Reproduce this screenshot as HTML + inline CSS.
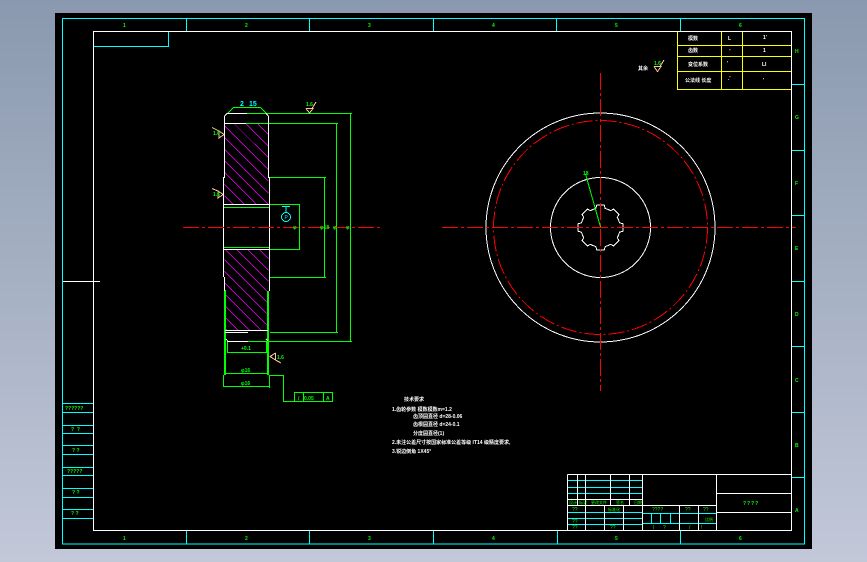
<!DOCTYPE html>
<html>
<head>
<meta charset="utf-8">
<style>
html,body{margin:0;padding:0;width:867px;height:562px;overflow:hidden;background:linear-gradient(#8a99af,#c2c8d8);}
svg{position:absolute;left:0;top:0;display:block;}
text{font-family:"Liberation Sans","Noto Sans CJK SC",sans-serif;font-size:5px;}
.g text,.g{fill:#00ff00;}
.w text{fill:#fff;}
</style>
</head>
<body>
<svg width="867" height="562" viewBox="0 0 867 562" shape-rendering="crispEdges" fill="none">
<defs>
<clipPath id="h1"><rect x="224.5" y="124" width="44" height="80"/></clipPath>
<clipPath id="h2"><rect x="224.5" y="250" width="44" height="80"/></clipPath>
</defs>
<rect x="55" y="13" width="757" height="536" fill="#000"/>

<!-- cyan frame -->
<g stroke="#00ffff" stroke-width="1">
<rect x="62.5" y="18.5" width="742" height="525.5"/>
<path d="M186.5 18.5V31M309.5 18.5V31M433.5 18.5V31M556.5 18.5V31M680.5 18.5V31"/>
<path d="M186.5 531V544M309.5 531V544M433.5 531V544M557.5 531V544M680.5 531V544"/>
<path d="M792 84.5H804M792 150.5H804M792 215.5H804M792 281.5H804M792 346.5H804M792 412.5H804M792 477.5H804"/>
<path d="M94 46.5H168.5V31.5"/>
<path d="M63 403.5H93M63 412.5H93M63 425.5H93M63 433.5H93M63 445.5H93M63 454.5H93M63 467.5H93M63 475.5H93M63 488.5H93M63 497.5H93M63 509.5H93M63 518.5H93"/>
</g>
<!-- white frame -->
<g stroke="#fff" stroke-width="1">
<rect x="93.5" y="31.5" width="698" height="499"/>
<path d="M63 281.5H100"/>
</g>

<!-- top right table -->
<g stroke="#ffff00" stroke-width="1">
<path d="M677.5 31.5V89.5H791M677.5 45.5H791M677.5 56.5H791M677.5 71.5H791M721.5 32V89M742.5 32V89"/>
</g>
<g class="w" font-weight="bold">
<text x="688" y="40">模数</text>
<text x="688" y="52">齿数</text>
<text x="688" y="66">变位系数</text>
<text x="685" y="82">公法线 长度</text>
<text x="728" y="40">L</text><text x="729" y="51">-</text><text x="727" y="65">'</text><text x="728" y="80">.'</text>
<text x="763" y="39">1'</text><text x="763" y="52">1</text><text x="762" y="66">LI</text><text x="763" y="82">'</text>
<text x="638" y="70">其余</text>
</g>

<!-- title block -->
<g stroke="#00ffff" stroke-width="1">
<path d="M568 480.5H642M568 487.5H642M568 493.5H642M568 512.5H642M568 518.5H642M568 524.5H642"/>
<path d="M643 513.5H716M643 523.5H716M651.5 514V523M660.5 514V523M670.5 514V523"/>
</g>
<g stroke="#fff" stroke-width="1">
<path d="M567.5 474.5H791M567.5 474.5V530M577.5 475V505M585.5 475V530M610.5 475V505M629.5 475V505M642.5 475V530M716.5 475V530"/>
<path d="M568 499.5H642M568 505.5H716M604.5 505V530M623.5 505V530M679.5 505V530M698.5 505V530"/>
<path d="M717 493.5H791M717 512.5H791"/>
</g>

<!-- zone labels -->
<g class="g" font-weight="bold">
<text x="123" y="27">1</text><text x="245" y="27">2</text><text x="368" y="27">3</text><text x="492" y="27">4</text><text x="615" y="27">5</text><text x="739" y="27">6</text>
<text x="123" y="540">1</text><text x="245" y="540">2</text><text x="368" y="540">3</text><text x="492" y="540">4</text><text x="615" y="540">5</text><text x="739" y="540">6</text>
<text x="795" y="53">H</text><text x="795" y="119">G</text><text x="795" y="185">F</text><text x="795" y="250">E</text><text x="795" y="316">D</text><text x="795" y="382">C</text><text x="795" y="447">B</text><text x="795" y="512">A</text>
<text x="65" y="410">??????</text>
<text x="71" y="431">?&#160;&#160;?</text>
<text x="72" y="452">? ?</text>
<text x="67" y="473">?????</text>
<text x="72" y="494">?&#160;?</text>
<text x="71" y="515">?&#160;?</text>
<text x="743" y="505" letter-spacing="1">????</text>
</g>
<g class="g">
<text x="569" y="504" style="font-size:4px">设计</text><text x="579" y="504" style="font-size:4px">标记</text><text x="591" y="504" style="font-size:4px">更改文件</text><text x="616" y="504" style="font-size:4px">签名</text><text x="634" y="504" style="font-size:4px">日期</text>
<text x="572" y="511">??</text><text x="608" y="511" style="font-size:4px">标准化</text>
<text x="572" y="523">??</text><text x="572" y="529">??</text><text x="610" y="529">??</text>
<text x="652" y="511">????</text><text x="685" y="511">??</text><text x="703" y="511">??</text><text x="705" y="521" style="font-size:4px">比例</text>
<text x="653" y="529">l</text><text x="663" y="529">?</text><text x="689" y="529">/</text><text x="701" y="529">!</text>
</g>

<!-- hatch -->
<g stroke="#ff00ff" stroke-width="0.7" clip-path="url(#h1)">
<path d="M224 78.4L269 123.4M224 90.1L269 135.1M224 101.8L269 146.8M224 113.5L269 158.5M224 125.2L269 170.2M224 136.9L269 181.9M224 148.6L269 193.6M224 160.3L269 205.3M224 172L269 217M224 183.7L269 228.7M224 195.4L269 240.4M224 207.1L269 252.1"/>
</g>
<g stroke="#ff00ff" stroke-width="0.7" clip-path="url(#h2)">
<path d="M224 203L269 248M224 214.3L269 259.3M224 225.6L269 270.6M224 236.9L269 281.9M224 248.2L269 293.2M224 259.5L269 304.5M224 270.8L269 315.8M224 282.1L269 327.1M224 293.4L269 338.4M224 304.7L269 349.7M224 316L269 361M224 327.3L269 372.3"/>
</g>

<!-- green dims -->
<g stroke="#00ff00" stroke-width="1">
<path d="M227.5 113.5L233.5 107.5H260.5L266.5 113.5"/>
<path d="M247 113.5H352M350.5 114V341"/>
<path d="M246 123.5H338M336.5 124V333M270 332.5H338"/>
<path d="M269 177.5H326M324.5 178V277.5M269 277.5H326"/>
<path d="M269 204.5H299.5V249.5H269"/>
<path d="M224 207.5H269M224 247.5H269"/>
<path d="M248 341.5H352"/>
<path d="M227.5 341V353M266.5 341V353M227.5 352.5H266.5"/>
<path d="M224.5 373.5H268.5M223.5 386.5H269.5"/>
<path d="M223.5 375V387M269.5 375V388"/>
<path d="M269 375.5H283.5V401.5H294.5"/>
<rect x="294.5" y="392.5" width="38" height="9"/>
<path d="M303.5 393V401M323.5 393V401"/>
</g>
<g stroke="#00ff00" stroke-width="2">
<path d="M225 290V375M268 291V375"/>
</g>
<!-- white profile -->
<g stroke="#fff" stroke-width="1">
<path d="M268.5 116V177.5H269.5V291M268.5 116L266 113.5"/>
<path d="M227 113.5H247M224.5 116L227 113.5M224.5 116V177.5H223.5V277M224.5 277V291"/>
<path d="M225 123.5H246"/>
<path d="M224 204.5H269M224 249.5H269"/>
<path d="M225 330.5H268M225 332.5H248"/>
<path d="M226 339L228 341.5H248M266 339L268 341"/>
</g>

<!-- right view -->
<g stroke="#fff" stroke-width="1">
<circle cx="600.5" cy="227.5" r="114.5"/>
<circle cx="600.5" cy="227.5" r="50"/>
<g transform="translate(600.5 227.5)">
<path d="M-4.7 -19L-3.8 -22.3L3.8 -22.3L4.7 -19A19.6 19.6 0 0 1 10.1 -16.8"/>
<path transform="rotate(45)" d="M-4.7 -19L-3.8 -22.3L3.8 -22.3L4.7 -19A19.6 19.6 0 0 1 10.1 -16.8"/>
<path transform="rotate(90)" d="M-4.7 -19L-3.8 -22.3L3.8 -22.3L4.7 -19A19.6 19.6 0 0 1 10.1 -16.8"/>
<path transform="rotate(135)" d="M-4.7 -19L-3.8 -22.3L3.8 -22.3L4.7 -19A19.6 19.6 0 0 1 10.1 -16.8"/>
<path transform="rotate(180)" d="M-4.7 -19L-3.8 -22.3L3.8 -22.3L4.7 -19A19.6 19.6 0 0 1 10.1 -16.8"/>
<path transform="rotate(225)" d="M-4.7 -19L-3.8 -22.3L3.8 -22.3L4.7 -19A19.6 19.6 0 0 1 10.1 -16.8"/>
<path transform="rotate(270)" d="M-4.7 -19L-3.8 -22.3L3.8 -22.3L4.7 -19A19.6 19.6 0 0 1 10.1 -16.8"/>
<path transform="rotate(315)" d="M-4.7 -19L-3.8 -22.3L3.8 -22.3L4.7 -19A19.6 19.6 0 0 1 10.1 -16.8"/>
</g>
</g>

<!-- centerlines -->
<g stroke="#ff0000" stroke-width="1">
<path stroke-dasharray="16 3 3 3" d="M183 227.5H383"/>
<path stroke-dasharray="16 3 3 3" d="M442 227.5H796"/>
<path stroke-dasharray="17 3 3 3" d="M600.5 73V391"/>
<circle cx="600.5" cy="227.5" r="107" stroke-dasharray="16 3 2 3"/>
</g>

<path d="M600.5 227L585.5 174" stroke="#00ff00" stroke-width="1"/>
<text x="583" y="175" fill="#00ff00" font-weight="bold">18</text>

<!-- roughness symbols -->
<g stroke="#ffc896" stroke-width="1">
<path d="M654 66.5H661L657.5 71.5L654 66.5M660 66.5L664 60"/>
<path d="M306 108.5H313L309.5 113L306 108.5M312 108.5L316 102"/>
<path d="M219 131V138L224 134.5L219 131L212 127.5"/>
<path d="M218 191V198L223 194.5L218 191L212 188.5"/>
<path d="M275.5 353V360L270 356.5L275.5 353M275.5 360L281 363"/>
</g>
<g class="g" font-weight="bold">
<text x="654" y="65">1.6</text>
<text x="306" y="106">1.6</text>
<text x="213" y="135">1.6</text>
<text x="213" y="196">1.6</text>
<text x="277" y="359">1.6</text>
<text x="293" y="229">φ</text>
<text x="320" y="229">φ18</text>
<text x="333" y="229">φ</text>
<text x="346" y="229">φ</text>
<text x="241" y="350">+0.1</text>
<text x="241" y="372">φ16</text>
<text x="241" y="385">φ16</text>
<text x="304" y="400">0.05</text>
<text x="326" y="400">A</text>
<text x="298" y="400">/</text>
</g>

<!-- datum -->
<g stroke="#00ffff" stroke-width="1">
<path d="M282 206.5H290M286 207V212"/>
<circle cx="286" cy="217" r="4.5"/>
</g>
<text x="284.5" y="219" fill="#00ffff">P</text>
<text x="240" y="106" fill="#00ffff" style="font-size:7px" font-weight="bold">2</text>
<text x="249" y="106" fill="#00ffff" style="font-size:7px" font-weight="bold">15</text>

<!-- notes -->
<g class="w" font-weight="bold">
<text x="404" y="401">技术要求</text>
<text x="392" y="411">1.齿轮参数 模数模数m=1.2</text>
<text x="413" y="418">齿顶圆直径 d=28-0.06</text>
<text x="413" y="426">齿根圆直径 d=24-0.1</text>
<text x="413" y="435">分度圆直径(1)</text>
<text x="392" y="444">2.未注公差尺寸按国家标准公差等级 IT14 级精度要求,</text>
<text x="392" y="453">3.锐边倒角 1X45°</text>
</g>
</svg>
</body>
</html>
